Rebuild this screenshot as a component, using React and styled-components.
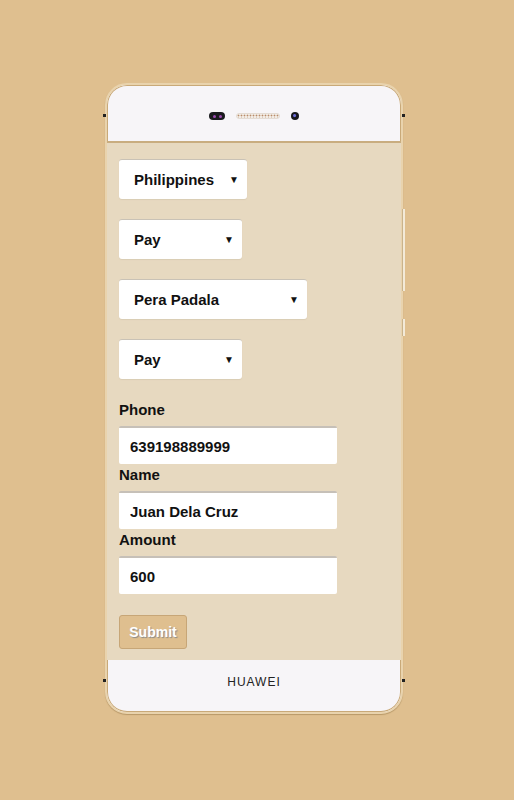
import React from "react";
import styled, { createGlobalStyle } from "styled-components";

const Global = createGlobalStyle`
  html, body {
    margin: 0;
    padding: 0;
    background: #dfbf8f;
    font-family: "Liberation Sans", Arial, sans-serif;
  }
`;

const Page = styled.div`
  width: 514px;
  height: 800px;
  padding: 83px 0 0 105px;
  box-sizing: border-box;
`;

const Phone = styled.div`
  position: relative;
  width: 298px;
  height: 631px;
  box-sizing: border-box;
  border: 2px solid #e9d3ad;
  border-radius: 22px;
  background: #f7f5f8;
  box-shadow: inset 0 0 0 1px #c9a978, 0 1px 1px #b89868;
  display: flex;
  flex-direction: column;
`;

const SideDot = styled.span`
  position: absolute;
  width: 3px;
  height: 3px;
  background: #222;
  top: ${(p) => p.top}px;
  ${(p) => (p.right ? "right: -4px;" : "left: -4px;")}
`;

const SideButton = styled.span`
  position: absolute;
  right: -4px;
  width: 2px;
  top: ${(p) => p.top}px;
  height: ${(p) => p.h}px;
  background: #f3ead8;
  border-left: 1px solid #c9b38c;
`;

const Header = styled.div`
  height: 58px;
  border-radius: 20px 20px 0 0;
  border-bottom: 2px solid #c9ad80;
  display: flex;
  align-items: center;
  justify-content: center;
  gap: 11px;
  padding-top: 6px;
  box-sizing: border-box;
`;

const Sensor = styled.span`
  width: 16px;
  height: 8px;
  border-radius: 4px;
  background: #1a1a1e;
  display: flex;
  align-items: center;
  justify-content: space-around;
  padding: 0 2px;
  box-sizing: border-box;
`;

const SensorDot = styled.span`
  width: 3px;
  height: 3px;
  border-radius: 50%;
  background: #9b4bb0;
`;

const Speaker = styled.span`
  width: 44px;
  height: 6px;
  border-radius: 3px;
  background: radial-gradient(circle, #b88b6a 0.8px, transparent 1.1px) 0 0 / 3px 3px, #f2ece6;
  border: 1px solid #e4dcd4;
  box-sizing: border-box;
`;

const Camera = styled.span`
  width: 8px;
  height: 8px;
  border-radius: 50%;
  background: radial-gradient(circle at 45% 45%, #6a6ad8 1px, #16161c 2px);
`;

const Screen = styled.div`
  flex: 1;
  background: #e7d9c0;
  padding: 16px 12px 0;
  display: flex;
  flex-direction: column;
  align-items: flex-start;
`;

const Select = styled.div`
  width: ${(p) => p.w}px;
  height: 40px;
  box-sizing: border-box;
  background: #fff;
  border-radius: 3px;
  border-top: 1px solid #c9c2b6;
  box-shadow: 0 1px 1px #d9ccb4;
  display: flex;
  align-items: center;
  justify-content: space-between;
  padding: 0 8px 0 15px;
  margin-bottom: ${(p) => (p.last ? 22 : 20)}px;
  font-size: 15px;
  font-weight: bold;
  color: #111;
`;

const Arrow = styled.span`
  font-size: 10px;
  color: #111;
`;

const Label = styled.label`
  display: block;
  font-size: 15px;
  font-weight: bold;
  line-height: 18px;
  color: #111;
  margin-bottom: 7px;
`;

const Input = styled.input`
  width: 218px;
  height: 38px;
  box-sizing: border-box;
  border: none;
  border-top: 2px solid #c6c0b8;
  border-radius: 2px;
  background: #fff;
  padding: 0 11px;
  font-family: "Liberation Sans", Arial, sans-serif;
  font-size: 15px;
  font-weight: bold;
  color: #111;
  margin: 0 0 2px;
  outline: none;
`;

const Submit = styled.button`
  margin-top: 19px;
  width: 68px;
  height: 34px;
  background: #dfbf8f;
  border: 1px solid #c7a677;
  border-radius: 3px;
  color: #fff;
  font-family: "Liberation Sans", Arial, sans-serif;
  font-size: 14px;
  font-weight: bold;
  text-shadow: 1px 1px 1px #8a8a8a;
  padding: 0;
`;

const Footer = styled.div`
  height: 52px;
  border-radius: 0 0 20px 20px;
  display: flex;
  align-items: center;
  justify-content: center;
  padding-bottom: 8px;
  box-sizing: border-box;
  font-size: 12px;
  letter-spacing: 1px;
  color: #222;
`;

function Field({ label, value }) {
  return (
    <>
      <Label>{label}</Label>
      <Input defaultValue={value} />
    </>
  );
}

export default function App() {
  return (
    <>
      <Global />
      <Page>
        <Phone>
          <SideDot top={29} />
          <SideDot top={29} right />
          <SideDot top={594} />
          <SideDot top={594} right />
          <SideButton top={124} h={82} />
          <SideButton top={234} h={17} />
          <Header>
            <Sensor>
              <SensorDot />
              <SensorDot />
            </Sensor>
            <Speaker />
            <Camera />
          </Header>
          <Screen>
            <Select w={128}>
              Philippines <Arrow>▼</Arrow>
            </Select>
            <Select w={123}>
              Pay <Arrow>▼</Arrow>
            </Select>
            <Select w={188}>
              Pera Padala <Arrow>▼</Arrow>
            </Select>
            <Select w={123} last>
              Pay <Arrow>▼</Arrow>
            </Select>
            <Field label="Phone" value="639198889999" />
            <Field label="Name" value="Juan Dela Cruz" />
            <Field label="Amount" value="600" />
            <Submit>Submit</Submit>
          </Screen>
          <Footer>HUAWEI</Footer>
        </Phone>
      </Page>
    </>
  );
}
